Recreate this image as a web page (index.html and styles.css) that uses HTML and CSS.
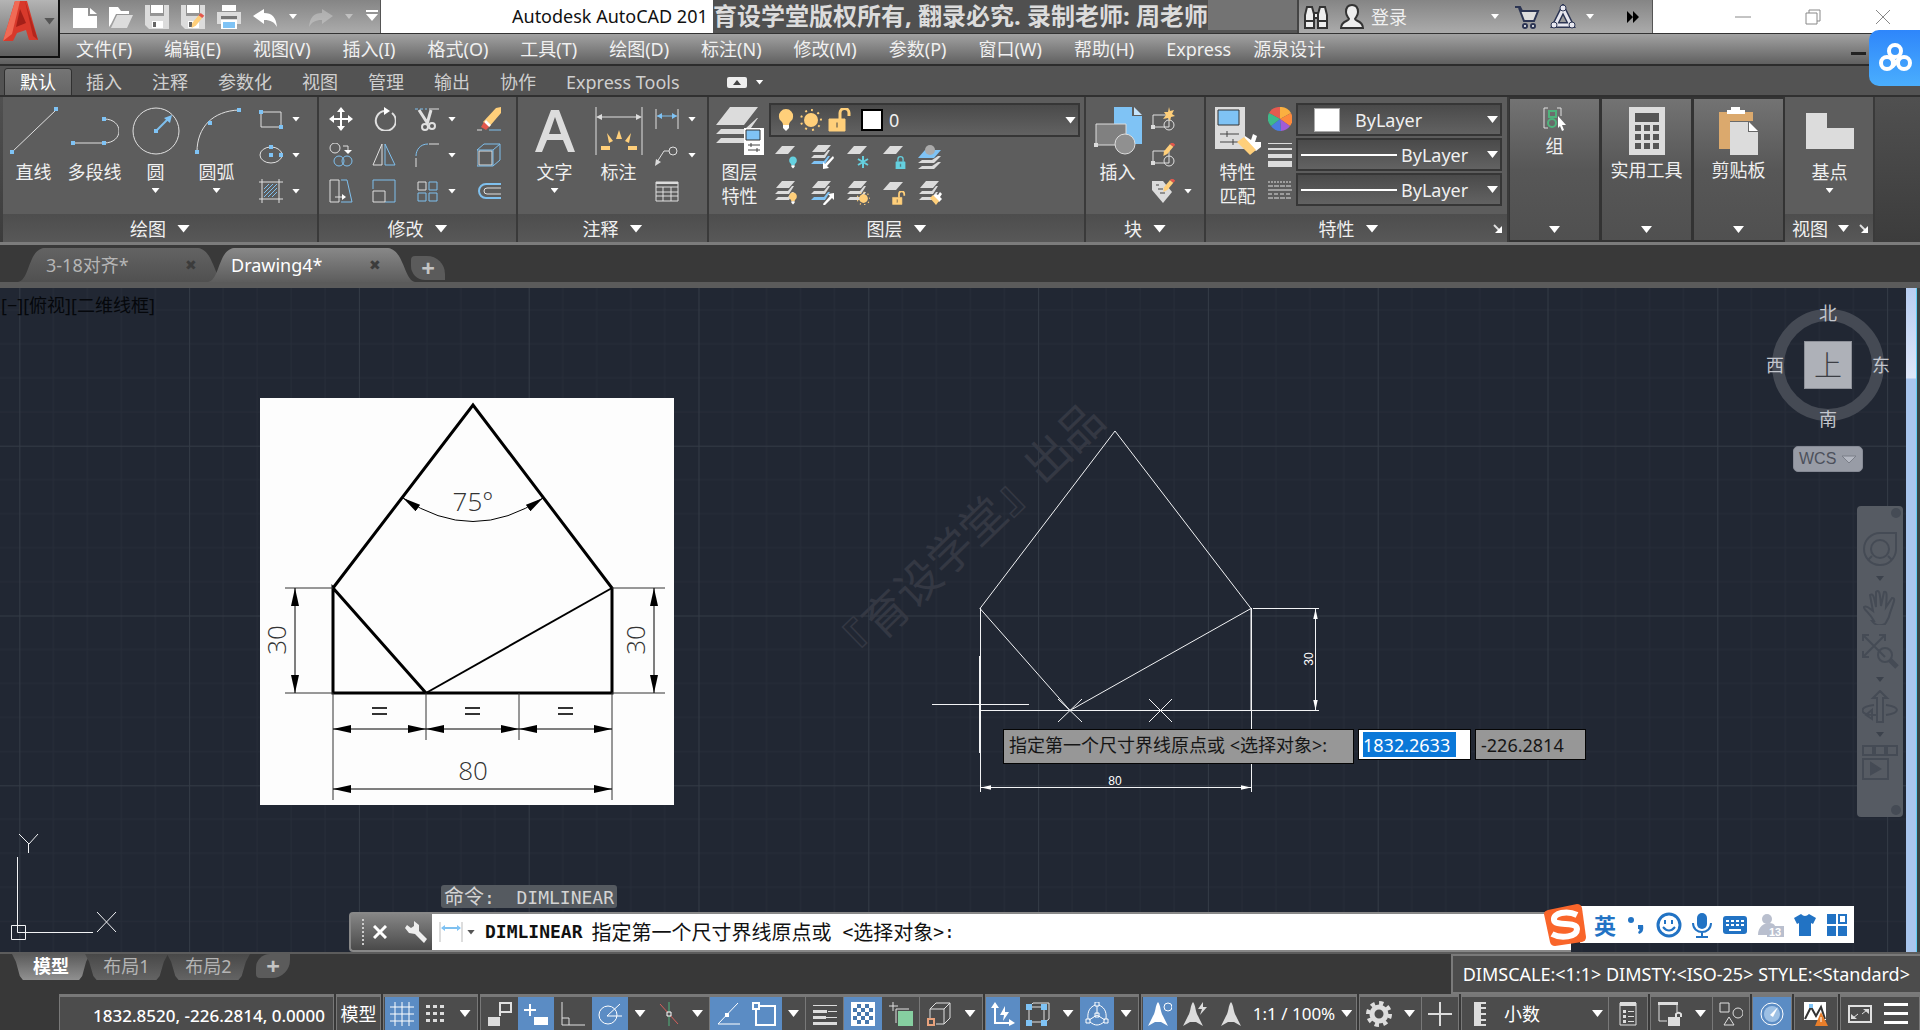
FILE: index.html
```html
<!DOCTYPE html>
<html lang="zh-CN">
<head>
  <meta charset="UTF-8" />
  <meta name="viewport" content="width=device-width, initial-scale=1.0"/>
  <title>Autodesk AutoCAD</title>
  <link rel="stylesheet" href="styles.css">
</head>
<body>
  <!-- shared icon parts -->
  <svg class="sprite" aria-hidden="true">
    <symbol id="sheet" viewBox="0 0 24 24"><path class="fw" d="M8 1h13l-7 8H1z"/></symbol>
    <symbol id="sheets" viewBox="0 0 24 24"><path class="fw" d="M8 0h13l-6 7H2zM4 10h10l4-5h2l-5 8H1zM4 16h10l4-5h2l-5 8H1z"/></symbol>
    <symbol id="sheets-blue" viewBox="0 0 24 24"><path class="fw" d="M8 0h13l-6 7H2zM4 10h10l4-5h2l-5 8H1z"/><path class="fb" d="M4 16h10l4-5h2l-5 8H1z"/></symbol>
    <symbol id="bulb" viewBox="0 0 16 24"><path d="M8 1a7 7 0 0 1 7 8c0 4-4 4-4 8H5c0-4-4-4-4-8a7 7 0 0 1 7-8z"/><path class="fwhite" d="M5 17h6v3l-3 3-3-3z"/></symbol>
    <symbol id="sun" viewBox="0 0 24 24"><circle cx="12" cy="12" r="7"/><path stroke-width="2" stroke-dasharray="2 5" fill="none" stroke="#ffcf7a" d="M12 2a10 10 0 1 1-.1 0"/></symbol>
    <symbol id="lock" viewBox="0 0 16 20"><path d="M1 9h14v11H1z"/><path fill="none" stroke-width="2" d="M4 9V5a4 4 0 0 1 8 0v4"/><path fill="#444" d="M7 12h2v5H7z"/></symbol>
    <symbol id="unlock" viewBox="0 0 24 24"><path d="M1 11h16v12H1z"/><path fill="none" stroke-width="3" d="M12 11V5a4 4 0 0 1 9 0v3"/><path fill="#444" d="M8 14h2v6H8z"/></symbol>
    <symbol id="blk" viewBox="0 0 24 24"><path class="w" d="M2 8h16v12H2z"/><circle class="w" cx="18" cy="18" r="5"/><path class="fw" d="M0 18h4v4H0z"/></symbol>
    <symbol id="pencil" viewBox="0 0 24 24"><path fill="#ffcf7a" d="M6 14l9-11 5 4-9 11-6 3z"/><path fill="#e2574c" d="M15 3l3-3 5 4-3 3z"/></symbol>
    <symbol id="disk" viewBox="0 0 24 24"><path class="fw" d="M0 0h5v11h14V0h5v24H4l-4-4z"/><path class="fwhite" d="M6 0h12v8H6zM7 16h11v7H7z"/><path fill="#666" d="M8 17h3v5H8z"/></symbol>
  </svg>

  <header class="titlebar">
    <button class="app-btn" aria-label="应用程序菜单">
      <svg width="36" height="42" viewBox="0 0 36 42"><path fill="#d8392b" d="M12 1h12l11 39h-9l-3-10-9 3-4 8H0L12 1z"/><path fill="#a31f18" d="M17 9l6 14-10 4z"/><path fill="#f06a55" d="M12 1h5L9 34l-9 7z"/><path fill="#b4261c" d="M22 1l13 39-5-4z"/></svg>
      <i class="caret mid dark"></i>
    </button>
    <div class="quick">
      <button aria-label="新建"><svg width="24" height="24"><path class="fwhite" d="M0 3h15v8h9v12H0zM17 3l7 6h-7z"/></svg></button>
      <button aria-label="打开"><svg width="24" height="24"><path class="fwhite" d="M0 2h9l3 4h8v3H7L2 19l-2 3z"/><path class="fw" d="M8 10h16l-6 13H2z"/></svg></button>
      <button aria-label="保存"><svg width="24" height="24"><use href="#disk"/></svg></button>
      <button aria-label="另存为"><svg width="24" height="24"><use href="#disk"/><use href="#pencil" x="7" y="8" width="17" height="17"/></svg></button>
      <button aria-label="打印"><svg width="24" height="24"><path class="fwhite" d="M5 0h14v6H5z"/><path class="fw" d="M0 7h24v12H0z"/><path fill="#777" d="M4 11h16v3H4z"/><path class="fb" stroke="#fff" stroke-width="2" d="M5 16h14v8H5z"/></svg></button>
      <button aria-label="放弃"><svg width="24" height="24"><path class="fwhite" d="M0 11L11 4v4c8 0 12 4 13 14-3-5-6-7-13-7v4z"/></svg></button>
      <i class="caret"></i>
      <button aria-label="重做" class="faded"><svg width="24" height="24"><path class="fw" d="M24 11L13 4v4C5 8 1 12 0 22c3-5 6-7 13-7v4z"/></svg></button>
      <i class="caret faded"></i>
      <button aria-label="自定义"><svg width="14" height="24"><path class="fwhite" d="M1 5h12v2H1zM1 9h12l-6 7z"/></svg></button>
    </div>
    <div class="caption">Autodesk AutoCAD 201</div>
    <div class="notice"><span>育设学堂版权所有, 翻录必究. 录制老师: 周老师</span></div>
    <div class="info">
      <button aria-label="搜索"><svg width="26" height="26"><path fill="#eee" stroke="#333" stroke-width="2" d="M4 3h5l2 7v14H2V11zM22 3h-5l-2 7v14h9V11zM11 9h4v5h-4zM2 17h9M15 17h9"/></svg></button>
      <button class="login"><svg width="26" height="26"><path fill="#eee" stroke="#333" stroke-width="2" d="M13 1c4 0 6 3 6 7s-2 5-3 7c0 2 8 2 8 9H2c0-7 8-7 8-9-1-2-3-3-3-7s2-7 6-7z"/></svg>登录</button>
      <i class="caret push"></i>
      <button aria-label="商店"><svg width="26" height="26"><path fill="#ddd" stroke="#2c3553" stroke-width="2" d="M1 3h5l2 4h16l-4 10H10L5 4"/><circle cx="11" cy="22" r="2" fill="#fff" stroke="#2c3553" stroke-width="2"/><circle cx="19" cy="22" r="2" fill="#fff" stroke="#2c3553" stroke-width="2"/></svg></button>
      <button aria-label="A360"><svg width="26" height="26"><path fill="none" stroke="#2c3553" stroke-width="6" d="M13 5l8 16H5z"/><path fill="none" stroke="#e8e8f0" stroke-width="3" d="M13 5l8 16H5z"/><g fill="#e8e8f0" stroke="#2c3553"><circle cx="13" cy="4" r="3"/><circle cx="4" cy="21" r="3"/><circle cx="22" cy="21" r="3"/></g></svg></button>
      <i class="caret"></i>
      <button class="more" aria-label="更多"><svg width="14" height="14"><path d="M1 1l6 6-6 6zM7 1l6 6-6 6z"/></svg></button>
    </div>
    <div class="window-btns">
      <button aria-label="最小化"><svg width="16" height="16"><path d="M0 8h16"/></svg></button>
      <button aria-label="还原"><svg width="16" height="16"><path d="M1 4h11v11H1zM4 4V1h11v11h-3"/></svg></button>
      <button aria-label="关闭"><svg width="16" height="16"><path d="M1 1l14 14M15 1L1 15"/></svg></button>
    </div>
    <button class="cloud" aria-label="网盘"><svg width="34" height="30" fill="none" stroke="#fff" stroke-width="4"><circle cx="16" cy="8" r="6"/><circle cx="8" cy="20" r="6"/><circle cx="25" cy="20" r="6"/><path d="M21 15l-8 9M12 15l4 4"/></svg></button>
  </header>

  <nav class="menubar">
    <a href="#">文件(F)</a><a href="#">编辑(E)</a><a href="#">视图(V)</a><a href="#">插入(I)</a><a href="#">格式(O)</a><a href="#">工具(T)</a><a href="#">绘图(D)</a><a href="#">标注(N)</a><a href="#">修改(M)</a><a href="#">参数(P)</a><a href="#">窗口(W)</a><a href="#">帮助(H)</a><a href="#">Express</a><a href="#" class="last">源泉设计</a>
    <i class="mdi-min"></i>
  </nav>

  <nav class="ribbon-tabs">
    <a href="#" class="active">默认</a><a href="#">插入</a><a href="#">注释</a><a href="#">参数化</a><a href="#">视图</a><a href="#">管理</a><a href="#">输出</a><a href="#">协作</a><a href="#">Express Tools</a>
    <button class="collapse" aria-label="最小化功能区"><svg width="20" height="11"><rect width="20" height="11" rx="2" fill="#eee"/><path fill="#444" d="M6 8l4-5 4 5z"/></svg><i class="caret"></i></button>
  </nav>

  <section class="ribbon">
    <div class="panel draw">
      <div class="tools">
        <button class="big"><svg width="48" height="48"><path class="w" d="M2 45L46 3"/><path class="fb" d="M0 43h4v4H0zM44 0h4v4h-4z"/></svg>直线</button>
        <button class="big"><svg width="48" height="48"><path class="w" d="M2 36h31M33 12c20 0 20 24 0 24"/><path class="fb" d="M0 34h4v4H0zM31 34h4v4h-4zM31 10h4v4h-4z"/></svg>多段线</button>
        <button class="big"><svg width="48" height="48"><circle class="w" cx="24" cy="24" r="23"/><path class="b" stroke-width="2" d="M24 24L36 12"/><path class="fb" d="M22 22h4v4h-4zM40 8l-2 8-6-5z"/></svg>圆<i class="caret"></i></button>
        <button class="big"><svg width="48" height="48"><path class="w" d="M4 45C4 20 20 4 46 3"/><path class="fb" d="M2 43h4v4H2zM15 14h4v4h-4zM44 1h4v4h-4z"/></svg>圆弧<i class="caret"></i></button>
        <div class="small one">
          <button aria-label="矩形"><svg width="24" height="24"><path class="w" d="M2 5h20v15H2z"/><path class="fb" d="M0 3h4v4H0zM20 18h4v4h-4z"/></svg><i class="caret"></i></button>
          <button aria-label="椭圆"><svg width="24" height="24"><ellipse class="w" cx="12" cy="12" rx="11" ry="8"/><path class="fb" d="M10 2h4v4h-4zM10 10h4v4h-4zM20 10h4v4h-4z"/></svg><i class="caret"></i></button>
          <button aria-label="图案填充"><svg width="24" height="24"><path class="w" d="M0 3h24M0 20h24M3 0v24M20 0v24"/><path class="b" d="M5 10l5-5M5 14l9-9M5 18l13-13M9 18l9-9M13 18l5-5"/></svg><i class="caret"></i></button>
        </div>
      </div>
      <button class="panel-title">绘图<i class="caret large"></i></button>
    </div>

    <div class="panel modify">
      <div class="tools">
        <div class="small four">
          <button aria-label="移动"><svg width="24" height="24"><path class="fwhite" d="M12 0l4 5h-3v6h6V8l5 4-5 4v-3h-6v6h3l-4 5-4-5h3v-6H5v3l-5-4 5-4v3h6V5H8z"/></svg></button>
          <button aria-label="旋转"><svg width="24" height="24"><path class="w" stroke-width="2" d="M20 6A10 10 0 1 1 12 4"/><path class="fwhite" d="M12 0l6 4-6 4z"/></svg></button>
          <button aria-label="修剪"><svg width="24" height="24"><path class="b" stroke-dasharray="3 2" d="M0 2h12"/><path class="w" d="M14 2h10"/><path class="w" stroke-width="3" d="M4 3l9 14M16 3l-4 14"/><circle class="w" stroke-width="2" cx="10" cy="20" r="3"/><circle class="w" stroke-width="2" cx="17" cy="19" r="3"/></svg><i class="caret"></i></button>
          <button aria-label="删除"><svg width="24" height="24"><path fill="#ffcf7a" d="M24 0v6L12 20l-6-5L19 1z"/><path fill="#fff" d="M9 13l5 5-2 2-5-4z"/><path fill="#e2574c" d="M7 15l5 5-3 3-5-3z"/><path class="w" d="M0 23h5"/><path class="b" d="M12 23h12"/></svg></button>
          <button aria-label="复制"><svg width="24" height="24"><circle class="w" cx="6" cy="5" r="5"/><circle class="b" cx="10" cy="18" r="5"/><circle class="b" cx="18" cy="18" r="5"/><path class="w" d="M14 3h5v5"/><path class="fwhite" d="M15 7h8l-4 4z"/></svg></button>
          <button aria-label="镜像"><svg width="24" height="24"><path class="w" d="M10 1v21H1z"/><path class="b" d="M13 1v21h10z"/></svg></button>
          <button aria-label="圆角"><svg width="24" height="24"><path class="w" d="M14 1h10M1 15v9"/><path class="b" d="M1 13C1 7 5 1 13 1"/></svg><i class="caret"></i></button>
          <button aria-label="分解"><svg width="24" height="24"><path class="w" d="M2 8h13v14H2z"/><path class="b" d="M0 7h16v16H0zM0 7l7-6h16l-7 6M23 1v16l-7 6"/></svg></button>
          <button aria-label="拉伸"><svg width="24" height="24"><path class="w" d="M1 1h9v22H1zM6 18h9"/><path class="b" d="M12 1h6l5 22H12"/><path class="fwhite" d="M13 15l4 3-4 3z"/></svg></button>
          <button aria-label="缩放"><svg width="24" height="24"><path class="b" d="M1 10V1h22v22H13"/><path class="w" d="M1 12h12v11H1z"/></svg></button>
          <button aria-label="阵列"><svg width="24" height="24"><path class="w" d="M3 3h8v8H3z"/><path class="b" d="M14 3h8v8h-8zM3 14h8v8H3zM14 14h8v8h-8z"/></svg><i class="caret"></i></button>
          <button aria-label="偏移"><svg width="24" height="24"><path class="b" stroke-width="2" d="M24 5H9a7 7 0 0 0 0 14h15"/><path class="w" d="M24 9H10a3 3 0 0 0 0 6h14"/></svg></button>
        </div>
      </div>
      <button class="panel-title">修改<i class="caret large"></i></button>
    </div>

    <div class="panel annotate">
      <div class="tools">
        <button class="big"><svg width="48" height="48"><path class="fw" d="M20 3h8l16 42h-7l-5-12H16l-5 12H4zm4 7l-6 17h12z"/></svg>文字<i class="caret"></i></button>
        <button class="big"><svg width="48" height="48"><path class="w" d="M1 0v48M47 0v48M3 10h42"/><path class="fw" d="M1 10l6-3v6zM47 10l-6-3v6z"/><path fill="#ffcf7a" d="M24 23l3 9h-6zM12 26l6 8-4 2zM36 26l-6 8 4 2zM6 39l9 0 0 4-9 0zM42 39l-9 0 0 4 9 0z"/></svg>标注</button>
        <div class="small one">
          <button aria-label="线性"><svg width="24" height="24"><path class="w" d="M1 2v20M23 2v20"/><path class="b" d="M2 9h20"/><path class="fb" d="M2 9l5-3v6zM22 9l-5-3v6z"/></svg><i class="caret"></i></button>
          <button aria-label="引线"><svg width="24" height="24"><circle class="w" cx="18" cy="8" r="4"/><path class="w" d="M14 8H9L2 19"/><path class="fw" d="M0 23l1-7 5 3z"/></svg><i class="caret"></i></button>
          <button aria-label="表格"><svg width="24" height="24"><path class="w" d="M1 3h22v19H1zM1 8h22M1 13h22M1 17h22M8 8v14M16 8v14"/><path class="fw" d="M1 3h22v2H1z"/></svg></button>
        </div>
      </div>
      <button class="panel-title">注释<i class="caret large"></i></button>
    </div>

    <div class="panel layers">
      <div class="tools">
        <button class="big"><svg width="48" height="48"><path class="fw" d="M14 0h28L28 18H0zM5 22h24L41 11h1l-7 10v6H0zM5 31h23v5H0z"/><path class="fwhite" d="M28 21h20v27H28z"/><path fill="#7fc3f5" stroke="#333" d="M30 23h14v10H30z"/><path stroke="#444" d="M32 38h12M32 43h12M35 36v4M41 41v4"/></svg>图层<br>特性</button>
        <div class="layer-box">
          <div class="combo">
            <svg width="16" height="24" class="yellow"><use href="#bulb"/></svg>
            <svg width="24" height="24" class="yellow"><use href="#sun"/></svg>
            <svg width="24" height="24" class="yellow stroked"><use href="#unlock"/></svg>
            <i class="swatch"></i>
            <select aria-label="图层"><option>0</option></select><i class="caret mid"></i>
          </div>
          <div class="layer-grid">
            <button aria-label="关"><svg width="24" height="24"><use href="#sheet"/><use class="cyan" href="#bulb" x="13" y="11" width="12" height="13"/></svg></button>
            <button aria-label="隔离"><svg width="24" height="24"><use href="#sheets-blue"/><path class="fwhite" d="M13 24v-7l2 2 8-8 1 2-7 8 2 2z"/></svg></button>
            <button aria-label="冻结"><svg width="24" height="24"><use href="#sheet"/><path stroke="#65d0df" stroke-width="2" d="M17 11v12M12 14l10 6M22 14l-10 6"/></svg></button>
            <button aria-label="锁定"><svg width="24" height="24"><use href="#sheet"/><use class="cyan stroked" href="#lock" x="12" y="11" width="13" height="13"/></svg></button>
            <button aria-label="置为当前"><svg width="24" height="24"><path class="fw" d="M4 15h10l6-4h3l-7 7H0zM4 21h10l6-4h3l-7 7H0z"/><path class="fb" d="M7 5h16l-7 8H0z"/><circle cx="12" cy="5" r="5" fill="#aaa"/></svg></button>
            <button aria-label="打开所有图层"><svg width="24" height="24"><use href="#sheets"/><use class="yellow" href="#bulb" x="13" y="11" width="12" height="13"/></svg></button>
            <button aria-label="取消隔离"><svg width="24" height="24"><use href="#sheets-blue"/><path class="fwhite" d="M24 12v7l-2-2-8 8-1-2 7-8-2-2z"/></svg></button>
            <button aria-label="解冻"><svg width="24" height="24"><use href="#sheets"/><use class="yellow" href="#sun" x="10" y="10" width="15" height="15"/></svg></button>
            <button aria-label="解锁"><svg width="24" height="24"><use href="#sheet"/><use class="yellow stroked" href="#unlock" x="10" y="10" width="14" height="14"/></svg></button>
            <button aria-label="匹配图层"><svg width="24" height="24"><use href="#sheets"/><path class="fwhite" d="M18 13l2 1 2-3 2 2-2 3 2 2-3 3-6-6z"/><path fill="#ffcf7a" d="M15 14l6 6-3 4-6-7z"/></svg></button>
          </div>
        </div>
      </div>
      <button class="panel-title">图层<i class="caret large"></i></button>
    </div>

    <div class="panel block">
      <div class="tools">
        <button class="big"><svg width="48" height="48"><path class="fb" d="M20 0h18v9h10v28H20z"/><path fill="#c6e4fb" d="M40 0l8 8h-8z"/><path fill="#808080" stroke="#ddd" d="M2 17h30v21H2z"/><circle cx="31" cy="37" r="10" fill="#909090" stroke="#ddd"/><path class="fw" d="M0 36h4v4H0z"/></svg>插入</button>
        <div class="small one">
          <button aria-label="创建块"><svg width="24" height="24"><use href="#blk"/><path fill="#ffcf7a" d="M18 0l1 4 4-1-2 4 3 2-4 1-1 4-2-3-5 1 3-4-2-3 4 0z"/></svg></button>
          <button aria-label="编辑块"><svg width="24" height="24"><use href="#blk"/><use href="#pencil" x="9" y="-1" width="16" height="16"/></svg></button>
          <button aria-label="编辑属性"><svg width="24" height="24"><path class="fw" d="M1 2h11l9 11-9 11L1 11z"/><use href="#pencil" x="9" y="-1" width="16" height="16"/><path stroke="#444" d="M5 6h3M7 10h5M9 14h5"/></svg><i class="caret"></i></button>
        </div>
      </div>
      <button class="panel-title">块<i class="caret large"></i></button>
    </div>

    <div class="panel props">
      <div class="tools">
        <button class="big"><svg width="48" height="48"><path class="fw" d="M1 0h30v42H1z"/><path fill="#7fc3f5" stroke="#333" d="M4 3h21v15H4z"/><path stroke="#444" d="M6 27h19M6 35h19M13 24v6M19 32v6"/><path class="fwhite" d="M31 29l6 4 2-6 4 2-2 6 6 0 0 5-5 4-12-10z"/><path fill="#ffcf7a" d="M30 30l12 13-6 5-13-13z"/></svg>特性<br>匹配</button>
        <div class="prop-icons">
          <svg width="24" height="24"><path fill="#e65a4f" d="M12 12L1 6A12 12 0 0 1 12 0z"/><path fill="#fbb040" d="M12 12V0a12 12 0 0 1 11 6z"/><path fill="#ff8a3c" d="M12 12l11-6a12 12 0 0 1-1 13z"/><path fill="#a05cd6" d="M12 12l10 7a12 12 0 0 1-9 5z"/><path fill="#4a7de0" d="M12 12l1 12a12 12 0 0 1-10-5z"/><path fill="#3fb98a" d="M12 12L3 19A12 12 0 0 1 1 6z"/></svg>
          <svg width="24" height="24"><path class="fw" d="M0 0h24v1H0zM0 5h24v2H0zM0 11h24v4H0zM0 18h24v6H0z"/></svg>
          <svg width="24" height="24"><g class="w"><path stroke-dasharray="2 1" d="M0 3h24"/><path stroke-dasharray="5 1" d="M0 7h24M0 19h24"/><path stroke-dasharray="4 2" d="M0 15h24"/><path d="M0 11h24"/></g></svg>
        </div>
        <div class="prop-combos">
          <div class="combo"><i class="swatch plain"></i><select aria-label="对象颜色"><option>ByLayer</option></select><i class="caret mid"></i></div>
          <div class="combo"><i class="rule"></i><select aria-label="线宽"><option>ByLayer</option></select><i class="caret mid"></i></div>
          <div class="combo"><i class="rule"></i><select aria-label="线型"><option>ByLayer</option></select><i class="caret mid"></i></div>
        </div>
      </div>
      <button class="panel-title">特性<i class="caret large"></i><svg class="launch" width="10" height="10"><path class="w" stroke-width="2" d="M1 1l6 6"/><path class="fwhite" d="M9 2v7H2z"/></svg></button>
    </div>

    <button class="folded"><svg width="24" height="24"><path class="w" d="M5 1H1v20h4M14 1h4v8"/><path fill="none" stroke="#4fb47c" stroke-width="2" d="M6 4h7v6H6z"/><circle cx="9" cy="16" r="4" fill="none" stroke="#4fb47c" stroke-width="2"/><path class="fwhite" d="M15 9l8 9h-4l2 5-2 1-2-5-2 2z"/></svg>组<i class="caret mid"></i></button>
    <button class="folded"><svg width="36" height="48"><path class="fw" d="M0 0h36v48H0z"/><path fill="#555" d="M6 6h24v9H6zM6 18h6v6H6zM15 18h6v6h-6zM24 18h6v6h-6zM6 27h6v6H6zM15 27h6v6h-6zM24 27h6v6h-6zM6 36h6v6H6zM15 36h6v6h-6zM24 36h6v6h-6z"/></svg>实用工具<i class="caret mid"></i></button>
    <button class="folded"><svg width="40" height="48"><path fill="#dba96d" d="M0 5h34v9H11v28H0z"/><path class="fwhite" d="M12 0h9v3h5v4H8V3h4z"/><path class="fw" d="M11 15h18v10h10v23H11z"/><path class="fwhite" d="M30 15l9 9h-9z"/></svg>剪贴板<i class="caret mid"></i></button>

    <div class="panel view">
      <div class="tools">
        <button class="big"><svg width="48" height="48"><path class="fw" d="M0 6h21v15h27v21H0z"/></svg>基点<i class="caret"></i></button>
      </div>
      <button class="panel-title">视图<i class="caret mid"></i><svg class="launch" width="10" height="10"><path class="w" stroke-width="2" d="M1 1l6 6"/><path class="fwhite" d="M9 2v7H2z"/></svg></button>
    </div>
  </section>

  <nav class="doc-tabs">
    <a href="#" class="doc-tab">3-18对齐*<span>✖</span></a>
    <a href="#" class="doc-tab active">Drawing4*<span>✖</span></a>
    <button class="add" aria-label="新图形">+</button>
  </nav>

  <main class="canvas">
    <svg class="model" width="1920" height="664" viewBox="0 288 1920 664">
      <defs>
        <pattern id="grid" x="19.3" y="445.7" width="169.8" height="169.8" patternUnits="userSpaceOnUse">
          <path stroke="#272d39" fill="none" d="M34 0v170M68 0v170M102 0v170M136 0v170M0 34h170M0 68h170M0 102h170M0 136h170"/>
          <path stroke="#343b46" stroke-width="2" fill="none" d="M0 0v170M0 0h170"/>
        </pattern>
        <marker id="arr" viewBox="0 0 18 8" refX="18" refY="4" markerWidth="18" markerHeight="8" markerUnits="userSpaceOnUse" orient="auto-start-reverse"><path d="M0 0v8l18-4z"/></marker>
        <marker id="arr-s" viewBox="0 0 9 4" refX="9" refY="2" markerWidth="10" markerHeight="5" markerUnits="userSpaceOnUse" orient="auto-start-reverse"><path fill="#fff" d="M0 0v4l9-2z"/></marker>
      </defs>
      <rect x="0" y="288" width="1920" height="664" fill="url(#grid)"/>
      <text class="stamp" text-anchor="middle" transform="translate(978 548) rotate(-44)">『育设学堂』出品</text>

      <!-- attached exercise sheet -->
      <rect x="260" y="398" width="414" height="407" fill="#fdfdfd"/>
      <g fill="none" stroke="#000">
        <path stroke-width="3" d="M333 588L473 405 612 588V693H333V588L426 693"/>
        <path stroke-width="2" d="M426 693L612 588"/>
        <path stroke="#333" d="M285 588h48M285 693h48M612 588h53M612 693h53M333 693v107M612 693v107M426 693v47M519 693v47"/>
        <g marker-start="url(#arr)" marker-end="url(#arr)">
          <path d="M295 588v105"/><path d="M654 588v105"/><path d="M333 729h93"/><path d="M426 729h93"/><path d="M519 729h93"/><path d="M333 789h279"/><path d="M403 498Q473 545 543 498"/>
        </g>
        <path stroke="#333" stroke-width="2" d="M372 708h15M372 714h15M465 708h15M465 714h15M558 708h15M558 714h15"/>
      </g>
      <g class="sheet-text" text-anchor="middle">
        <text x="473" y="511">75°</text>
        <text x="473" y="780">80</text>
        <text transform="translate(286 640) rotate(-90)">30</text>
        <text transform="translate(645 640) rotate(-90)">30</text>
      </g>

      <!-- drawn geometry -->
      <g fill="none" stroke="#f2f3f5">
        <path d="M980 608.500L1115 431 1251 608.500V710.500M1251 608.500L1070 710.500 980 608.500"/>
        <path d="M980.500 608V792M1251.500 608V792M980 710.500H1319M1253 608.500H1319M932 704.500h97"/>
        <path stroke-width="2" d="M980 656v97"/>
        <path d="M1058 699l24 23M1082 699l-24 23M1149 699l23 23M1172 699l-23 23"/>
        <path marker-start="url(#arr-s)" marker-end="url(#arr-s)" d="M1315.500 609V710"/>
        <path marker-start="url(#arr-s)" marker-end="url(#arr-s)" d="M981 787.500H1251"/>
        <path d="M17.500 857V932.500H93M11.500 925.500h14v14h-14zM97 912l19 20M116 912L97 932M19 834l10 10 9-10M28.500 844v9"/>
      </g>
      <g class="dim-text" text-anchor="middle">
        <text x="1115" y="785">80</text>
        <text transform="translate(1313 659) rotate(-90)">30</text>
      </g>
    </svg>

    <div class="view-label">[−][俯视][二维线框]</div>

    <form class="prompt">
      <label for="dyn-x">指定第一个尺寸界线原点或 &lt;选择对象&gt;:</label>
      <span class="dyn"><input id="dyn-x" type="text" value="1832.2633"></span>
      <input class="dyn-y" type="text" value="-226.2814" aria-label="Y">
    </form>

    <div class="viewcube">
      <span class="n">北</span><span class="s">南</span><span class="w-side">西</span><span class="e">东</span>
      <button class="face">上</button>
    </div>
    <button class="wcs">WCS<svg width="16" height="9"><path fill="#b4b8c2" stroke="#7a7e88" d="M1 1h14L8 8z"/></svg></button>

    <div class="navbar">
      <i class="dot"></i>
      <svg width="36" height="36"><path d="M18 1h16v17a16 16 0 1 1-16-17z"/><circle cx="18" cy="17" r="9"/><path d="M10 24l-4 4M26 24l4 4"/></svg>
      <i class="caret"></i>
      <svg class="hand" width="36" height="36"><path d="M12 32C8 24 1 20 2 18c3-2 6 2 9 4L8 6c3-2 4 1 6 12V3c3-3 4 0 5 14l3-14c3-1 3 2 2 15l6-9c4 0 2 3-2 15-1 6-3 8-5 11-4 2-9 2-13-3z"/></svg>
      <svg width="38" height="36"><path d="M2 2l22 22M24 2L2 24M2 8V2h6M18 2h6v6M2 18v6h6"/><circle cx="24" cy="22" r="7"/><path stroke-width="5" d="M29 27l7 7"/></svg>
      <i class="caret"></i>
      <svg width="36" height="34"><path d="M15 32V8h-4l7-7 7 7h-4v24zM12 15C-4 17-2 24 10 25h6M24 15c15 2 14 8 0 10M10 20v9l-6-4z"/></svg>
      <i class="caret"></i>
      <svg width="36" height="36"><path d="M1 1h10v9H1zM13 1h10v9H13zM25 1h10v9H25zM1 14h25v20H1z"/><path fill="#454b55" d="M9 18v11l9-5z"/></svg>
      <i class="dot end"></i>
    </div>
    <div class="edge"></div>

    <div class="history"><span class="cjk">命令</span>:&nbsp; DIMLINEAR</div>
    <form class="command">
      <i class="grip"></i>
      <button type="button" aria-label="关闭"><svg width="14" height="14"><path stroke="#fff" stroke-width="3" d="M1 1l12 12M13 1L1 13"/></svg></button>
      <button type="button" aria-label="自定义"><svg width="22" height="22"><path fill="#eee" d="M2 4l4 3 3-2V0l5 4v6l8 8-3 4-9-9-6-1-4-5z"/></svg></button>
      <label class="entry" for="cmd"><svg width="24" height="20"><path stroke="#bbb" d="M1 0v20M23 0v20"/><path class="b" stroke-width="2" d="M3 6h18"/><path class="fb" d="M2 6l4-3v6zM22 6l-4-3v6z"/></svg><i class="caret dark"></i><b>DIMLINEAR</b><span class="cjk">指定第一个尺寸界线原点或</span> &lt;<span class="cjk">选择对象</span>&gt;:<input id="cmd" type="text"></label>
    </form>

    <div class="ime">
      <svg class="logo" width="44" height="44"><path fill="#f9652a" d="M6 7l29-6q4 0 5 4l4 29q0 4-4 5L13 43q-4 0-5-4L2 11q0-3 4-4z"/><path fill="none" stroke="#fff" stroke-width="6" d="M35 12C25 7 11 10 12 17s23 1 23 9-16 10-25 5"/></svg>
      <b>英</b>
      <svg width="20" height="26"><circle cx="5" cy="8" r="3"/><path d="M12 13h5c1 6-1 8-4 9l-1-2c2-1 2-3 0-3z"/></svg>
      <svg width="26" height="26"><circle cx="13" cy="13" r="11" fill="none" stroke="#2273c4" stroke-width="3"/><path d="M8 8h2v4H8zM15 8h2v4h-2z"/><path fill="none" stroke="#2273c4" stroke-width="2" d="M7 15q6 7 12 0"/></svg>
      <svg width="20" height="26"><rect x="5" y="1" width="10" height="16" rx="5"/><path fill="none" stroke="#2273c4" stroke-width="2" d="M1 11c0 12 18 12 18 0M10 20v5M4 25h12"/></svg>
      <svg width="26" height="26"><rect x="1" y="4" width="24" height="18" rx="3"/><path stroke="#fff" stroke-width="2" stroke-dasharray="3 2" d="M4 9h18M4 13h18"/><path stroke="#fff" stroke-width="2" d="M7 18h12"/></svg>
      <svg class="grey" width="26" height="26"><circle cx="9" cy="7" r="5"/><path d="M0 23c0-14 16-14 17-9h9v11H9v-2z"/><text x="11" y="24">13</text></svg>
      <svg width="22" height="26"><path d="M7 2q4 4 8 0l7 4-3 6-2-1v13H5V11l-2 1-3-6z"/></svg>
      <svg width="22" height="26"><path d="M1 2h9v10H1zM1 14h9v10H1zM12 14h9v10h-9z"/><rect x="13" y="3" width="7" height="8" fill="none" stroke="#2273c4" stroke-width="2"/></svg>
    </div>
  </main>

  <footer>
    <div class="layout-row">
      <nav class="layout-tabs">
        <a href="#" class="active">模型</a><a href="#">布局1</a><a href="#">布局2</a><button class="add" aria-label="新建布局">+</button>
      </nav>
      <div class="dim-info">DIMSCALE:&lt;1:1&gt; DIMSTY:&lt;ISO-25&gt; STYLE:&lt;Standard&gt;</div>
    </div>
    <div class="status">
      <div class="group coords">1832.8520, -226.2814, 0.0000</div>
      <div class="group"><button class="space">模型</button></div>
      <div class="group pad">
        <button class="on slim" aria-label="栅格"><svg width="24" height="24"><path class="lw" d="M0 5h24M0 12h24M0 19h24M5 0v24M12 0v24M19 0v24"/></svg></button>
        <button class="slim" aria-label="捕捉"><svg width="20" height="20"><path class="fw" d="M0 1h4v3H0zM7 1h4v3H7zM14 1h4v3h-4zM0 8h4v3H0zM7 8h4v3H7zM14 8h4v3h-4zM0 15h4v3H0zM7 15h4v3H7zM14 15h4v3h-4z"/></svg></button>
        <button class="drop" aria-label="捕捉设置"><i class="caret mid"></i></button>
      </div>
      <div class="group pad">
        <button aria-label="推断约束"><svg width="24" height="24"><path class="w" stroke-width="2" d="M12 1h11v9H12zM12 10v4"/><path class="fw" d="M0 15h12v9H0z"/></svg></button>
        <button class="on" aria-label="动态输入"><svg width="24" height="24"><path class="lw" stroke-width="2" d="M6 2v12M0 8h12"/><path class="fwhite" d="M10 15h14v8H10z"/></svg></button>
        <button class="wide" aria-label="正交"><svg width="24" height="24"><path class="w" d="M1 0v23h23M1 16h7v7"/></svg></button>
        <button class="on" aria-label="极轴"><svg width="24" height="24"><circle class="lw" cx="10" cy="13" r="9"/><path class="lw" d="M9 14L22 2M9 14h15"/></svg></button>
        <button class="drop" aria-label="极轴设置"><i class="caret mid"></i></button>
        <button class="slim" aria-label="等轴测"><svg width="24" height="24"><path stroke="#4fb47c" d="M12 0v24"/><path stroke="#d9605c" d="M3 2l18 20"/><path fill="#555" stroke="#fff" d="M10 10h4v4h-4z"/></svg></button>
        <button class="drop line" aria-label="等轴测设置"><i class="caret mid"></i></button>
        <button class="on" aria-label="对象追踪"><svg width="24" height="24"><path class="lw" d="M22 1L2 22h22"/><path class="fwhite" d="M9 11h4v4H9z"/></svg></button>
        <button class="on" aria-label="对象捕捉"><svg width="24" height="24"><path class="lw" stroke-width="2" d="M1 1h6v6H1zM8 4h15v19H4V8"/></svg></button>
        <button class="drop line" aria-label="对象捕捉设置"><i class="caret mid"></i></button>
        <button class="wide line" aria-label="线宽"><svg width="24" height="24"><path class="fw" d="M0 3h24v1H0zM0 8h14v3H0zM15 9h9v1h-9zM0 14h13v3H0zM13 15h11v1H13zM0 20h24v3H0z"/></svg></button>
        <button class="on wide" aria-label="透明度"><svg width="24" height="24"><path class="fwhite" d="M0 0h24v24H0z"/><path fill="#4677ad" d="M6 2h4v4H6zM14 2h4v4h-4zM2 6h4v4H2zM10 6h4v4h-4zM18 6h4v4h-4zM6 10h4v4H6zM14 10h4v4h-4zM2 14h4v4H2zM10 14h4v4h-4zM18 14h4v4h-4zM6 18h4v4H6zM14 18h4v4h-4z"/></svg></button>
        <button class="wide line" aria-label="选择循环"><svg width="24" height="24"><path class="w" d="M4 0v9M0 4h9M20 7H7v14"/><path fill="#86cfa0" d="M9 9h15v15H9z"/></svg></button>
        <button class="wide" aria-label="三维捕捉"><svg width="24" height="24"><path class="w" d="M3 16V7l6-6h14v15l-6 6h-8M3 7h14v15M17 7l6-6"/><path fill="none" stroke="#e8a27c" stroke-width="2" d="M1 17h6v6H1z"/></svg></button>
        <button class="drop" aria-label="三维捕捉设置"><i class="caret mid"></i></button>
      </div>
      <div class="group">
        <button class="on slim" aria-label="动态UCS"><svg width="24" height="24"><path class="lw" stroke-width="2" d="M4 3v18h18"/><path class="fwhite" d="M0 6l4-6 4 6zM18 17l6 4-6 3zM14 4l-5 9h4l-1 6 6-9h-4z"/></svg></button>
        <button aria-label="选择过滤"><svg width="24" height="24"><path class="w" d="M3 5h15v15H3zM3 5l4-4h16v16l-5 4"/><path class="fb" d="M0 2h6v6H0zM15 2h6v6h-6zM0 18h6v6H0zM15 18h6v6h-6z"/></svg></button>
        <button class="drop" aria-label="过滤设置"><i class="caret mid"></i></button>
        <button class="on slim" aria-label="小控件"><svg width="24" height="24"><path class="lw" d="M12 4v8M12 13l-8 5M12 13l8 5M3 17C2 8 6 5 10 3M21 17c1-9-3-12-7-14M5 20c5 4 9 4 14 0M10 0h4v4h-4zM10 11h4v4h-4zM1 17h4v4H1zM19 17h4v4h-4z"/></svg></button>
        <button class="drop" aria-label="小控件设置"><i class="caret mid"></i></button>
      </div>
      <div class="group pad">
        <button class="on slim" aria-label="注释可见性"><svg width="24" height="24"><path class="fwhite" d="M10 0c3 4 2 9 5 14l5 10-7-4h-6l-7 4 5-10c3-5 2-10 5-14z"/><circle class="lw" cx="20" cy="5" r="4"/></svg></button>
        <button aria-label="自动缩放"><svg width="24" height="24"><path class="fw" d="M10 0c3 4 2 9 5 14l5 10-7-4h-6l-7 4 5-10c3-5 2-10 5-14zM20 0l-5 7h4l-2 6 7-8h-4z"/></svg></button>
        <button aria-label="注释比例"><svg width="24" height="24"><path class="fw" d="M12 0c3 4 2 9 5 14l5 10-7-4H9l-7 4 5-10c3-5 2-10 5-14z"/></svg></button>
        <button class="scale">1:1 / 100%<i class="caret mid"></i></button>
      </div>
      <div class="group">
        <button class="wide" aria-label="切换工作空间"><svg width="26" height="26"><circle cx="13" cy="13" r="7" fill="none" stroke="#ddd" stroke-width="5"/><circle cx="13" cy="13" r="11" fill="none" stroke="#ddd" stroke-width="4" stroke-dasharray="4.300 4.300"/></svg></button>
        <button class="drop line" aria-label="工作空间"><i class="caret mid"></i></button>
        <button aria-label="注释监视器"><svg width="24" height="24"><path class="fw" d="M11 0h2v11h11v2H13v11h-2V13H0v-2h11z"/></svg></button>
      </div>
      <div class="group">
        <label class="units line"><svg width="12" height="24"><path class="fw" d="M0 0h12v2H7v3h5v2H7v4h5v2H7v4h5v2H7v3h5v2H0z"/></svg><select aria-label="单位"><option>小数</option></select><i class="caret mid"></i></label>
        <button class="wide" aria-label="快捷特性"><svg width="18" height="24"><path class="w" d="M1 1h16v22H1z"/><path class="fw" d="M1 0h16v4H1zM4 8h3v3H4zM9 9h6v1H9zM4 13h3v3H4zM9 14h6v1H9zM4 18h3v3H4zM9 19h6v1H9z"/></svg></button>
      </div>
      <div class="group">
        <button class="wide" aria-label="锁定界面"><svg width="24" height="24"><path class="w" d="M9 19H1V1h18v9"/><path class="fw" d="M0 0h20v3H0zM10 15h12v9H10z"/><path class="w" stroke-width="2" d="M18 15v-3a3 3 0 0 1 5 0v3"/></svg></button>
        <button class="drop line" aria-label="锁定设置"><i class="caret mid"></i></button>
        <button aria-label="隔离对象"><svg width="24" height="24"><path class="w" d="M1 1h9v9H1zM10 15l5 8H5z"/><circle class="w" cx="19" cy="11" r="5"/></svg></button>
      </div>
      <div class="group"><button class="on wide" aria-label="硬件加速"><svg width="26" height="26"><circle class="lw" cx="13" cy="13" r="11"/><circle cx="13" cy="13" r="8" fill="#9dc0e4"/><path class="fwhite" d="M19 6l-5 10-3-2z"/></svg></button></div>
      <div class="group perf"><button class="wide" aria-label="性能"><svg width="24" height="24"><path class="fwhite" d="M0 0h22v18H0z"/><path fill="none" stroke="#333" stroke-width="2" d="M1 17L7 5l5 9 5-9 4 12"/><path class="fb" d="M5 2h4v4H5z"/><path fill="#e87e2a" d="M17 10l7 14H11z"/><path stroke="#fff" d="M17 15v5"/></svg></button></div>
      <div class="group tail">
        <button class="wide" aria-label="全屏"><svg width="24" height="18"><path class="w" stroke-width="2" d="M1 1h22v16H1z"/><path class="fw" d="M15 4h6v5zM3 9v5h6z"/><path class="w" d="M14 9l5-4M5 13l5-4"/></svg></button>
        <button class="slim" aria-label="自定义"><svg width="24" height="24"><path class="fwhite" d="M0 1h24v3H0zM0 10h24v3H0zM0 19h24v3H0z"/></svg></button>
      </div>
    </div>
  </footer>
</body>
</html>
```
FILE: styles.css
```css
* {
  box-sizing: border-box;
}

body {
  margin: 0;
  min-height: 100vh;
  display: flex;
  flex-direction: column;
  overflow: hidden;
  font: 18px/24px "Noto Sans", "Noto Sans CJK SC", sans-serif;
  color: #f0f0f0;
  background: #383838;
}

button,
input,
select {
  font: inherit;
  color: inherit;
  background: none;
  border: 0;
  padding: 0;
  margin: 0;
  border-radius: 0;
}

a {
  color: inherit;
  text-decoration: none;
}

svg {
  display: block;
  flex: none;
}

.sprite {
  position: absolute;
  width: 0;
  height: 0;
}

/* icon paint */
.w { fill: none; stroke: #e0e0e0; }
.b { fill: none; stroke: #7fc0ee; }
.lw { fill: none; stroke: #fff; }
.fw { fill: #dcdcdc; }
.fb { fill: #7fc3f5; }
.fwhite { fill: #fff; }
.yellow { fill: #ffcf7a; }
.yellow.stroked { stroke: #ffcf7a; }
.cyan { fill: #65d0df; }
.cyan.stroked { stroke: #65d0df; }

.caret {
  flex: none;
  width: 8px;
  height: 5px;
  background: #fff;
  clip-path: polygon(0 0, 100% 0, 50% 100%);
}

.caret.mid { width: 11px; height: 7px; }
.caret.large { width: 13px; height: 8px; }
.caret.dark { background: #555; }
.faded { opacity: 0.4; }

/* title bar */
.titlebar {
  position: relative;
  z-index: 2;
  flex: none;
  display: flex;
  height: 34px;
  padding-left: 60px;
  background: #fff;
  border-bottom: 1px solid #333;
}

.app-btn {
  position: absolute;
  left: 0;
  top: 0;
  width: 60px;
  height: 58px;
  padding: 0 3px 14px;
  display: flex;
  align-items: center;
  gap: 5px;
  background: linear-gradient(#b4b4b4, #8c8c8c 50%, #5e5e5e);
  border-right: 2px solid #111;
  border-bottom: 2px solid #111;
}

.quick {
  display: flex;
  align-items: center;
  gap: 12px;
  width: 321px;
  padding-left: 13px;
  background: linear-gradient(#858585, #ababab);
  border-right: 1px solid #555;
}

.caption {
  width: 332px;
  padding-left: 131px;
  line-height: 33px;
  color: #111;
  white-space: nowrap;
}

.notice {
  width: 584px;
  background: #737373;
  border-bottom: 3px solid #555;
  white-space: nowrap;
}

.notice span {
  display: inline-block;
  height: 30px;
  background: #505050;
  color: #dcdcdc;
  font-size: 24px;
  font-weight: bold;
  line-height: 32px;
}

.info {
  display: flex;
  align-items: center;
  gap: 10px;
  width: 356px;
  padding: 0 12px 0 4px;
  background: linear-gradient(#858585, #ababab);
  border-left: 2px solid #444;
  border-right: 1px solid #555;
}

.login {
  display: flex;
  align-items: center;
  gap: 6px;
}

.push {
  margin-left: auto;
}

.info .push + button {
  margin-left: 5px;
}

.info .more {
  margin-left: 22px;
}

.window-btns {
  flex: 1;
  display: flex;
  justify-content: flex-end;
  align-items: center;
  gap: 54px;
  padding-right: 29px;
}

.window-btns path {
  fill: none;
  stroke: #888;
}

.cloud {
  position: absolute;
  right: 0;
  top: 30px;
  width: 51px;
  height: 56px;
  padding-left: 10px;
  border-radius: 10px 0 0 10px;
  background: linear-gradient(#2e86fb, #4aaefd);
}

/* menus */
.menubar {
  flex: none;
  display: flex;
  gap: 32px;
  height: 32px;
  padding-left: 76px;
  line-height: 31px;
  background: linear-gradient(#a2a2a2, #606060);
  border-bottom: 2px solid #2c2c2c;
}

.menubar .last {
  margin-left: -10px;
}

.mdi-min {
  width: 15px;
  height: 3px;
  margin: 18px 54px 0 auto;
  background: #222;
}

.ribbon-tabs {
  flex: none;
  display: flex;
  height: 31px;
  padding: 3px 0 0 5px;
  line-height: 26px;
  color: #cfcfcf;
  background: #535353;
  border-bottom: 2px solid #303030;
}

.ribbon-tabs a {
  padding: 0 15px;
}

.ribbon-tabs .active {
  color: #fff;
  background: linear-gradient(#757575, #666);
  border-radius: 3px 3px 0 0;
  box-shadow: 0 0 0 1px #303030;
}

.collapse {
  display: flex;
  align-items: center;
  gap: 9px;
  margin-left: 32px;
}

/* ribbon */
.ribbon {
  flex: none;
  display: flex;
  height: 148px;
  padding-left: 3px;
  background: linear-gradient(#505050, #3c3c3c);
  border-bottom: 3px solid #7c7c7c;
}

.panel {
  flex: none;
  display: flex;
  flex-direction: column;
  background: #5d5d5d;
  border-right: 2px solid #3a3a3a;
}

.draw { width: 316px; }
.modify { width: 199px; }
.annotate { width: 191px; }
.layers { width: 377px; }
.block { width: 120px; }
.props { width: 303px; }
.view { width: 90px; }

.tools {
  display: flex;
  flex: 1;
  padding-top: 10px;
}

.annotate .tools {
  padding-left: 6px;
  gap: 3px;
}

.block .tools,
.props .tools {
  padding-left: 1px;
}

.view .tools {
  padding-left: 14px;
}

.panel-title {
  position: relative;
  display: flex;
  justify-content: center;
  align-items: center;
  gap: 11px;
  height: 28px;
  padding-top: 1px;
  background: linear-gradient(#4d4d4d, #585858);
}

.props .panel-title {
  padding-right: 16px;
}

.launch {
  position: absolute;
  right: 4px;
  top: 10px;
}

.big {
  display: flex;
  flex-direction: column;
  align-items: center;
  flex: none;
  width: 61px;
  height: 106px;
  line-height: 24px;
}

.big svg {
  margin-bottom: 5px;
}

.big .caret {
  margin-top: 4px;
}

.small {
  display: grid;
  grid-auto-rows: 24px;
  gap: 12px 0;
  align-content: start;
  margin-left: 3px;
}

.small button {
  display: flex;
  align-items: center;
  gap: 9px;
}

.draw .small {
  margin-left: 12px;
}

.four {
  grid-template-columns: 43px 43px 62px 24px;
  margin-left: 10px;
}

.combo {
  display: flex;
  align-items: center;
  padding-right: 2px;
  background: linear-gradient(#4a4a4a, #626262);
  border: 2px solid #363636;
}

.combo select {
  flex: 1;
  min-width: 0;
  appearance: none;
  outline: 0;
}

.layer-box .combo {
  width: 311px;
  height: 34px;
  margin: -4px 0 8px -1px;
  gap: 5px;
  padding-left: 7px;
}

.swatch {
  width: 22px;
  height: 22px;
  margin: 0 1px 0 4px;
  background: #fff;
  border: 2px solid #000;
}

.swatch.plain {
  width: 26px;
  height: 24px;
  margin: 0 15px 0 16px;
  border: 1px solid #aaa;
}

.layer-grid {
  display: grid;
  grid-template-columns: repeat(5, 24px);
  gap: 12px;
  margin-left: 4px;
}

.prop-icons {
  display: flex;
  flex-direction: column;
  gap: 12px;
}

.prop-combos {
  display: flex;
  flex-direction: column;
  gap: 2px;
  width: 206px;
  margin: -4px 0 0 4px;
}

.prop-combos .combo {
  height: 33px;
}

.rule {
  width: 96px;
  height: 2px;
  margin: 0 4px 0 3px;
  background: #fff;
}

.folded {
  display: flex;
  flex-direction: column;
  align-items: center;
  flex: none;
  width: 92px;
  padding: 8px 0 7px;
  background: linear-gradient(#737373, #575757 50%, #505050);
  border: solid #333;
  border-width: 2px 2px 2px 1px;
}

.folded svg {
  margin-bottom: 3px;
}

.folded .caret {
  margin-top: auto;
}

.view .panel-title {
  justify-content: flex-start;
  gap: 10px;
  padding-left: 7px;
}

/* drawing tabs */
.doc-tabs {
  flex: none;
  display: flex;
  height: 43px;
  padding: 3px 0 0 18px;
  background: #393939;
  border-bottom: 6px solid #5b5b5b;
}

.doc-tab {
  display: flex;
  justify-content: space-between;
  align-items: center;
  width: 207px;
  margin-right: -17px;
  padding: 0 28px 0 28px;
  color: #b5b5b5;
  background: linear-gradient(#636363, #505050);
  clip-path: path("M0 34C12 32 10 2 26 0H180C196 2 196 32 207 34z");
}

.doc-tab.active {
  padding-right: 34px;
  padding-left: 23px;
  color: #fff;
  background: linear-gradient(#888, #5d5d5d);
}

.doc-tab span {
  font-size: 14px;
  color: #3c3c3c;
}

.add {
  width: 34px;
  height: 24px;
  line-height: 22px;
  font-size: 24px;
  font-weight: bold;
  color: #c4c4c4;
  background: #5b5b5b;
}

.doc-tabs .add {
  margin: 8px 0 0 13px;
  border-radius: 4px 18px 0 14px;
}

/* model space */
.canvas {
  position: relative;
  flex: 1;
  min-height: 600px;
  overflow: hidden;
  background: #212733;
}

.model {
  position: absolute;
  left: 0;
  top: 0;
}

.stamp {
  font-size: 45px;
  fill: #343843;
}

.sheet-text {
  font: 26px "Open Sans", sans-serif;
  font-weight: 300;
  fill: #333;
}

.dim-text {
  font: 12px "Liberation Sans", sans-serif;
  fill: #fff;
}

.view-label {
  position: absolute;
  left: 1px;
  top: 5px;
  color: #05070b;
}

.prompt {
  position: absolute;
  left: 1003px;
  top: 441px;
  display: flex;
  align-items: flex-start;
  gap: 4px;
  color: #161616;
}

.prompt label,
.dyn,
.dyn-y {
  border: 1px solid #050505;
  background: #979797;
}

.prompt label {
  width: 351px;
  height: 35px;
  padding: 3px 5px;
  white-space: nowrap;
}

.dyn {
  width: 113px;
  height: 31px;
  padding: 2px 4px;
  background: #fff;
}

.dyn input {
  display: block;
  width: 93px;
  height: 25px;
  color: #fff;
  background: #0b78d8;
}

.dyn-y {
  width: 111px;
  height: 31px;
  padding: 0 5px;
}

.viewcube {
  position: absolute;
  right: 36px;
  top: 21px;
  width: 112px;
  height: 112px;
  display: grid;
  place-items: center;
  border: 12px solid #454a54;
  border-radius: 50%;
  color: #c3c6cd;
}

.viewcube span {
  position: absolute;
}

.n { top: -20px; }
.s { bottom: -22px; }
.w-side { left: -18px; }
.e { right: -18px; }

.face {
  width: 48px;
  height: 48px;
  font-size: 28px;
  font-weight: 300;
  color: #3c3e44;
  background: #aeb1b8;
  border: 1px solid #8d9098;
}

.wcs {
  position: absolute;
  right: 57px;
  top: 158px;
  display: flex;
  align-items: center;
  justify-content: space-between;
  width: 70px;
  height: 26px;
  padding: 0 5px;
  font: 16px "Liberation Sans", sans-serif;
  color: #4c505b;
  background: #989ca6;
  border: 1px solid #868a95;
  border-radius: 5px;
}

.navbar {
  position: absolute;
  right: 17px;
  top: 218px;
  display: flex;
  flex-direction: column;
  align-items: center;
  gap: 8px;
  width: 46px;
  height: 311px;
  padding: 2px;
  background: #565b63;
  border-radius: 4px;
}

.navbar svg {
  fill: none;
  stroke: #454b55;
  stroke-width: 2;
}

.navbar .dot + svg {
  margin-top: 6px;
}

.navbar .caret {
  background: #3c424c;
}

.dot {
  flex: none;
  width: 10px;
  height: 10px;
  border-radius: 50%;
  align-self: flex-end;
  background: #454b55;
}

.dot.end {
  margin-top: auto;
}

.edge {
  position: absolute;
  right: 0;
  top: 0;
  bottom: 0;
  width: 14px;
  background: linear-gradient(#b8cef2, #dfe7f8 90px, #a9c6ee 91px);
  border-right: 3px solid #3a4443;
  box-shadow: inset -1px 0 #5fd0f5;
}

.history {
  position: absolute;
  left: 441px;
  bottom: 44px;
  height: 23px;
  padding: 0 3px;
  line-height: 21px;
  color: #d4d4d4;
  background: #555a60;
  border-radius: 3px;
}

.history,
.command {
  font-family: "DejaVu Sans Mono", "Noto Sans CJK SC", monospace;
}

.cjk {
  font-size: 20px;
  font-family: "Noto Sans CJK SC", sans-serif;
}

.command {
  position: absolute;
  left: 349px;
  right: 349px;
  bottom: 0;
  display: flex;
  align-items: center;
  gap: 18px;
  height: 40px;
  padding-left: 11px;
  background: linear-gradient(#858585, #4a4a4a);
  border: 2px solid #888;
  border-right: 0;
  border-radius: 4px 0 0 4px;
}

.grip {
  height: 26px;
  margin-right: -9px;
  border-left: 2px dotted #ccc;
}

.entry {
  flex: 1;
  display: flex;
  align-items: center;
  height: 36px;
  margin-left: -13px;
  padding-left: 7px;
  white-space: pre;
  color: #111;
  background: #fff;
}

.entry .caret {
  margin: 0 10px 0 4px;
}

.entry b {
  margin-right: 9px;
}

.entry input {
  flex: 1;
  min-width: 0;
}

.ime {
  position: absolute;
  right: 66px;
  bottom: 9px;
  display: flex;
  align-items: center;
  gap: 10px;
  width: 274px;
  height: 37px;
  padding-left: 12px;
  fill: #2273c4;
  color: #2273c4;
  background: #fff;
}

.ime b {
  font-size: 22px;
}

.ime .logo {
  margin: 0 -2px 0 -50px;
}

.grey {
  overflow: visible;
  fill: #b9bfce;
}

.grey text {
  font: bold 11px "Liberation Sans", sans-serif;
  fill: #fff;
}

/* bottom rows */
footer {
  flex: none;
}

.layout-row {
  display: flex;
  justify-content: space-between;
  height: 42px;
  border-top: 2px solid #5c5c5c;
}

.layout-tabs {
  display: flex;
  height: 26px;
  padding-left: 12px;
  line-height: 24px;
  color: #b4b4b4;
}

.layout-tabs a {
  width: 83px;
  margin-right: -1px;
  text-align: center;
  background: linear-gradient(#484848, #646464);
  clip-path: polygon(0 0, 100% 0, 95% 30%, 90% 85%, 86% 100%, 14% 100%, 10% 85%, 5% 30%);
}

.layout-tabs .active {
  width: 78px;
  margin-right: -5px;
  color: #fff;
  font-weight: bold;
  background: linear-gradient(#5a5a5a, #909090);
}

.layout-tabs .add {
  margin-left: 7px;
  border-radius: 14px 0 18px 4px;
}

.dim-info {
  padding: 0 10px;
  line-height: 36px;
  color: #fff;
  white-space: nowrap;
  background: #4c4c4c;
  border: 2px solid #7a7a7a;
  border-right: 0;
}

.status {
  display: flex;
  gap: 2px;
  height: 36px;
  padding-left: 59px;
  color: #fff;
}

.group {
  flex: none;
  display: flex;
  background: #4c4c4c;
  border: solid #787878;
  border-width: 3px 1px 0;
}

.pad {
  padding-left: 1px;
}

.coords {
  width: 275px;
  justify-content: flex-end;
  padding-right: 8px;
  font-size: 17px;
  font-weight: 500;
  line-height: 37px;
  white-space: nowrap;
}

.group button {
  display: grid;
  place-items: center;
  width: 36px;
}

.group .slim { width: 34px; }
.group .wide { width: 38px; }
.group .drop { width: 24px; }
.group .space { width: 43px; }
.group .on { background: #5b8cc4; }
.group .line { border-right: 1px solid #787878; }

.group .scale {
  display: flex;
  align-items: center;
  justify-content: center;
  gap: 6px;
  width: 107px;
  font-size: 17px;
  white-space: nowrap;
}

.units {
  display: flex;
  align-items: center;
  gap: 18px;
  width: 147px;
  padding: 0 5px 0 12px;
}

.units select {
  flex: 1;
  min-width: 0;
  appearance: none;
}

.perf {
  padding: 0 2px;
}

.tail {
  flex: 1;
}
```
